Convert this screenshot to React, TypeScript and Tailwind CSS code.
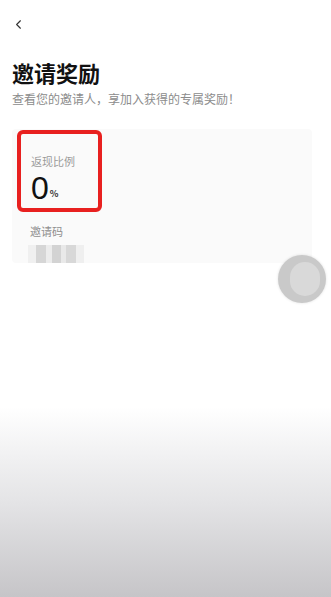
import { ChevronLeft } from "lucide-react";

const FONT = {
  fontFamily: '"Noto Sans CJK SC", "Noto Sans", sans-serif',
};

export default function App() {
  return (
    <div className="relative flex h-[597px] w-[331px] flex-col overflow-hidden bg-white" style={FONT}>
      {/* Top bar */}
      <div className="flex h-[50px] items-start pl-[11px] pt-[17px]">
        <ChevronLeft className="h-[15px] w-[15px] text-[#333]" strokeWidth={1.8} />
      </div>

      {/* Header */}
      <div className="px-[12px] pt-[7px]">
        <h1 className="text-[22px] font-bold leading-[30px] text-[#111]">邀请奖励</h1>
        <p className="mt-[4px] text-[12px] leading-[16px] text-[#8c8c8c]">查看您的邀请人，享加入获得的专属奖励！</p>
      </div>

      {/* Card */}
      <div className="mx-[12px] mt-[22px] h-[134px] w-[300px] rounded-[4px] bg-[#fafafa] pl-[5px] pt-[1px]">
        <div className="flex h-[82px] w-[85px] flex-col rounded-[6px] border-[4px] border-[#e8201f] pl-[10px] pt-[20px]">
          <span className="text-[11px] leading-[14px] text-[#9a9a9a]">返现比例</span>
          <div className="mt-[3px] flex items-end">
            <span
              className="text-[32px] leading-[34px] text-[#111]"
              style={{ fontFamily: '"Liberation Sans", Arial, sans-serif' }}
            >
              0
            </span>
            <span className="mb-[5px] ml-[1px] text-[9px] font-bold leading-[12px] text-[#333]">%</span>
          </div>
        </div>
        <div className="mt-[5px] pl-[13px]">
          <span className="text-[11px] leading-[14px] text-[#8f8f8f]">邀请码</span>
          <div className="-ml-[2px] mt-[4px] flex h-[18px] w-[56px]">
            <div className="h-full w-[8px] bg-[#f0f0f0]" />
            <div className="h-full w-[10px] bg-[#d6d6d6]" />
            <div className="h-full w-[6px] bg-[#ececec]" />
            <div className="h-full w-[9px] bg-[#d3d3d3]" />
            <div className="h-full w-[5px] bg-[#e9e9e9]" />
            <div className="h-full w-[10px] bg-[#d8d8d8]" />
            <div className="h-full w-[8px] bg-[#efefef]" />
          </div>
        </div>
      </div>

      <div className="flex-1" />

      {/* Bottom fade */}
      <div className="h-[190px] w-full bg-gradient-to-b from-white via-[#e4e4e6] to-[#c6c5c8]" />

      {/* Floating ball */}
      <div className="absolute left-[278px] top-[255px] flex h-[48px] w-[48px] items-center justify-center rounded-full bg-[#c9c9c9] shadow-[0_0_3px_rgba(0,0,0,0.12)]">
        <div className="ml-[6px] h-[34px] w-[30px] rounded-full bg-[#d9d9d9]" />
      </div>
    </div>
  );
}
